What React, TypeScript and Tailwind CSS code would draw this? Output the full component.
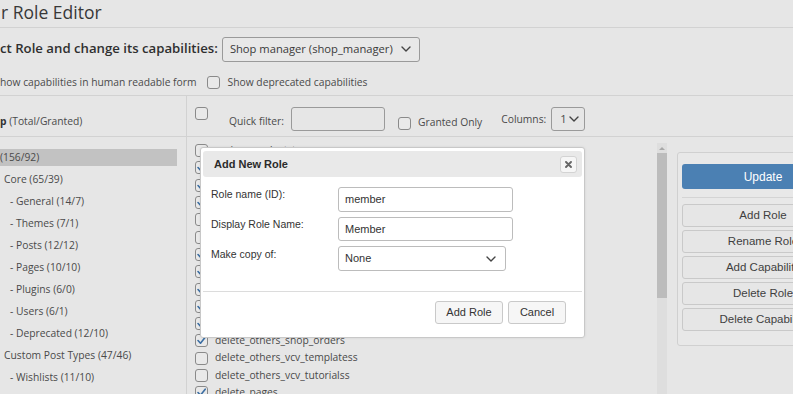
import React from "react";

const tree = [
  { label: "(156/92)", pad: "pl-0", active: true },
  { label: "Core (65/39)", pad: "pl-[4px]" },
  { label: "- General (14/7)", pad: "pl-[10px]" },
  { label: "- Themes (7/1)", pad: "pl-[10px]" },
  { label: "- Posts (12/12)", pad: "pl-[10px]" },
  { label: "- Pages (10/10)", pad: "pl-[10px]" },
  { label: "- Plugins (6/0)", pad: "pl-[10px]" },
  { label: "- Users (6/1)", pad: "pl-[10px]" },
  { label: "- Deprecated (12/10)", pad: "pl-[10px]" },
  { label: "Custom Post Types (47/46)", pad: "pl-[4px]" },
  { label: "- Wishlists (11/10)", pad: "pl-[10px]" },
];

const caps = [
  { name: "assign_product_terms", on: false },
  { name: "assign_shop_coupon_terms", on: true },
  { name: "assign_shop_order_terms", on: true },
  { name: "delete_others_pages", on: true },
  { name: "delete_others_posts", on: false },
  { name: "delete_others_products", on: false },
  { name: "delete_others_shop_coupons", on: true },
  { name: "delete_others_shop_webhooks", on: true },
  { name: "delete_others_tm_extra_product_options", on: true },
  { name: "delete_others_vcv_headers", on: true },
  { name: "delete_others_vcv_footers", on: true },
  { name: "delete_others_shop_orders", on: true },
  { name: "delete_others_vcv_templatess", on: false },
  { name: "delete_others_vcv_tutorialss", on: false },
  { name: "delete_pages", on: true },
];

const sideButtons = ["Add Role", "Rename Role", "Add Capability", "Delete Role", "Delete Capability"];

function Chevron({ className }: { className?: string }) {
  return (
    <svg className={className} width="10" height="6" viewBox="0 0 10 6" fill="none">
      <path d="M1 1l4 4 4-4" stroke="currentColor" strokeWidth="1.4" strokeLinecap="round" strokeLinejoin="round" />
    </svg>
  );
}

function Box({ on }: { on?: boolean }) {
  return (
    <span className="flex h-[13px] w-[13px] shrink-0 items-center justify-center rounded-[3px] border border-[#8a8a8a] bg-[#e9e9e9]">
      {on && (
        <svg width="11" height="11" viewBox="0 0 11 11" fill="none">
          <path d="M2 5.5l2.5 2.7L9.2 2.2" stroke="#3b6ea3" strokeWidth="1.6" strokeLinecap="round" strokeLinejoin="round" />
        </svg>
      )}
    </span>
  );
}

export default function App() {
  return (
    <div className="relative h-[394px] w-[793px] overflow-hidden whitespace-nowrap bg-[#e6e6e6] font-['Open_Sans',sans-serif] text-[#3d3d3d]">
      {/* title */}
      <div className="h-[28px] border-b border-[#d2d2d2] pl-[1px] text-[17.5px] leading-[25px] text-[#383838]">r Role Editor</div>

      {/* role select */}
      <div className="flex h-[42px] items-center">
        <span className="text-[13.2px] font-semibold text-[#2f2f2f]">ct Role and change its capabilities:</span>
        <div className="ml-[4px] flex h-[25px] w-[198px] items-center justify-between rounded-[3px] border border-[#9a9a9a] bg-[#e8e8e8] pl-[7px] pr-[8px] text-[11.2px] text-[#3a3a3a]">
          <span>Shop manager (shop_manager)</span>
          <Chevron className="text-[#444]" />
        </div>
      </div>

      {/* options row */}
      <div className="flex h-[26px] items-center border-b border-[#d2d2d2] text-[10.3px] text-[#4a4a4a]">
        <span>how capabilities in human readable form</span>
        <span className="ml-[10px]"><Box /></span>
        <span className="ml-[8px]">Show deprecated capabilities</span>
      </div>

      {/* main */}
      <div className="flex h-[300px]">
        {/* groups */}
        <div className="w-[187px] shrink-0 border-r border-[#d2d2d2]">
          <div className="flex h-[41px] items-center border-b border-[#d2d2d2] pt-[12px] text-[10.3px] text-[#4a4a4a]">
            <span className="font-bold text-[#333]">p</span>&nbsp;(Total/Granted)
          </div>
          <div className="pt-[12px]">
            {tree.map((t) => (
              <div key={t.label} className="h-[22px] pr-[9px]">
                <div className={`flex h-[17px] items-center text-[10.3px] text-[#4a4a4a] ${t.pad} ${t.active ? "bg-[#c2c2c2]" : ""}`}>
                  {t.label}
                </div>
              </div>
            ))}
          </div>
        </div>

        {/* capabilities + side */}
        <div className="flex min-w-0 flex-1 flex-col">
          <div className="flex h-[41px] shrink-0 items-start border-b border-[#d2d2d2] pl-[8px] pt-[11px] text-[10.3px] text-[#4a4a4a]">
            <Box />
            <span className="ml-[21px] mt-[7px]">Quick filter:</span>
            <span className="ml-[7px] h-[24px] w-[94px] rounded-[3px] border border-[#9a9a9a] bg-[#e6e6e6]" />
            <span className="ml-[13px] mt-[10px]"><Box /></span>
            <span className="ml-[7px] mt-[8px]">Granted Only</span>
            <span className="ml-[19px] mt-[5px]">Columns:</span>
            <span className="ml-[5px] flex h-[24px] w-[34px] items-center justify-between rounded-[3px] border border-[#9a9a9a] pl-[8px] pr-[5px] text-[11.2px]">
              1<Chevron className="text-[#444]" />
            </span>
          </div>

          <div className="flex min-h-0 flex-1">
            <div className="w-[470px] shrink-0 overflow-hidden pl-[8px] pt-[5px]">
              {caps.map((c) => (
                <div key={c.name} className="flex h-[17.3px] items-center gap-[7px] text-[10.3px] text-[#4a4a4a]">
                  <Box on={c.on} />
                  <span>{c.name}</span>
                </div>
              ))}
            </div>

            {/* scrollbar */}
            <div className="mt-[6px] flex w-[10px] shrink-0 flex-col bg-[#dedede]">
              <div className="flex h-[10px] items-center justify-center">
                <span className="h-0 w-0 border-x-[3px] border-b-[3px] border-x-transparent border-b-[#a8a8a8]" />
              </div>
              <div className="h-[145px] bg-[#bcbcbc]" />
            </div>

            {/* side panel */}
            <div className="ml-[10px] mt-[15px] w-[172px] shrink-0">
              <div className="h-[194px] rounded-[3px] border border-[#d0d0d0] bg-[#e8e8e8] px-[4px] pt-[11px] font-['Liberation_Sans',Arial,sans-serif] text-[11.5px] text-[#3f3f3f]">
                <div className="flex h-[25px] items-center justify-center rounded-[3px] bg-[#4b80b3] text-[12px] text-white">Update</div>
                <div className="mb-[6px] mt-[8px] border-t border-[#d4d4d4]" />
                <div className="flex flex-col gap-[3px]">
                  {sideButtons.map((b) => (
                    <div key={b} className="flex h-[23px] items-center justify-center rounded-[3px] border border-[#c9c9c9] bg-[#e6e6e6]">
                      {b}
                    </div>
                  ))}
                </div>
              </div>
            </div>
          </div>
        </div>
      </div>

      {/* modal */}
      <div className="absolute left-[200px] top-[147px] flex h-[191px] w-[385px] flex-col rounded-[3px] border border-[#c8c8c8] bg-white p-[2px] font-['Liberation_Sans',Arial,sans-serif] text-[#333] shadow-[0_0_3px_rgba(0,0,0,0.08)]">
        <div className="mt-[1px] flex h-[26px] shrink-0 items-center justify-between rounded-[3px] bg-[#e9e9e9] pl-[11px] pr-[5px]">
          <span className="text-[11px] font-bold text-[#2b2b2b]">Add New Role</span>
          <span className="flex h-[17px] w-[17px] items-center justify-center rounded-[3px] border border-[#d3d3d3] bg-[#f6f6f6]">
            <svg width="7" height="7" viewBox="0 0 7 7">
              <path d="M1 1l5 5M6 1L1 6" stroke="#666" strokeWidth="1.9" strokeLinecap="round" />
            </svg>
          </span>
        </div>

        <div className="flex flex-1 flex-col gap-[5px] pl-[8px] pt-[10px]">
          <div className="flex h-[25px] items-start">
            <span className="w-[127px] text-[10.5px] leading-[14px]">Role name (ID):</span>
            <span className="flex h-[25px] w-[175px] items-center rounded-[3px] border border-[#bcbcbc] px-[6px] text-[11px]">member</span>
          </div>
          <div className="flex h-[24px] items-start">
            <span className="w-[127px] text-[10.5px] leading-[14px]">Display Role Name:</span>
            <span className="flex h-[24px] w-[175px] items-center rounded-[3px] border border-[#bcbcbc] px-[6px] text-[11px]">Member</span>
          </div>
          <div className="flex h-[25px] items-start">
            <span className="w-[127px] pt-[1px] text-[10.5px] leading-[14px]">Make copy of:</span>
            <span className="flex h-[25px] w-[168px] items-center justify-between rounded-[3px] border border-[#bcbcbc] pl-[6px] pr-[9px] text-[11px]">
              None
              <Chevron className="text-[#444]" />
            </span>
          </div>
        </div>

        <div className="flex h-[44px] shrink-0 items-start justify-end gap-[5px] border-t border-[#dcdcdc] pr-[16px] pt-[9px]">
          <span className="flex h-[23px] w-[68px] items-center justify-center rounded-[3px] border border-[#c9c9c9] bg-[#f6f6f6] text-[11px]">Add Role</span>
          <span className="flex h-[23px] w-[58px] items-center justify-center rounded-[3px] border border-[#c9c9c9] bg-[#f6f6f6] text-[11px]">Cancel</span>
        </div>
      </div>
    </div>
  );
}
